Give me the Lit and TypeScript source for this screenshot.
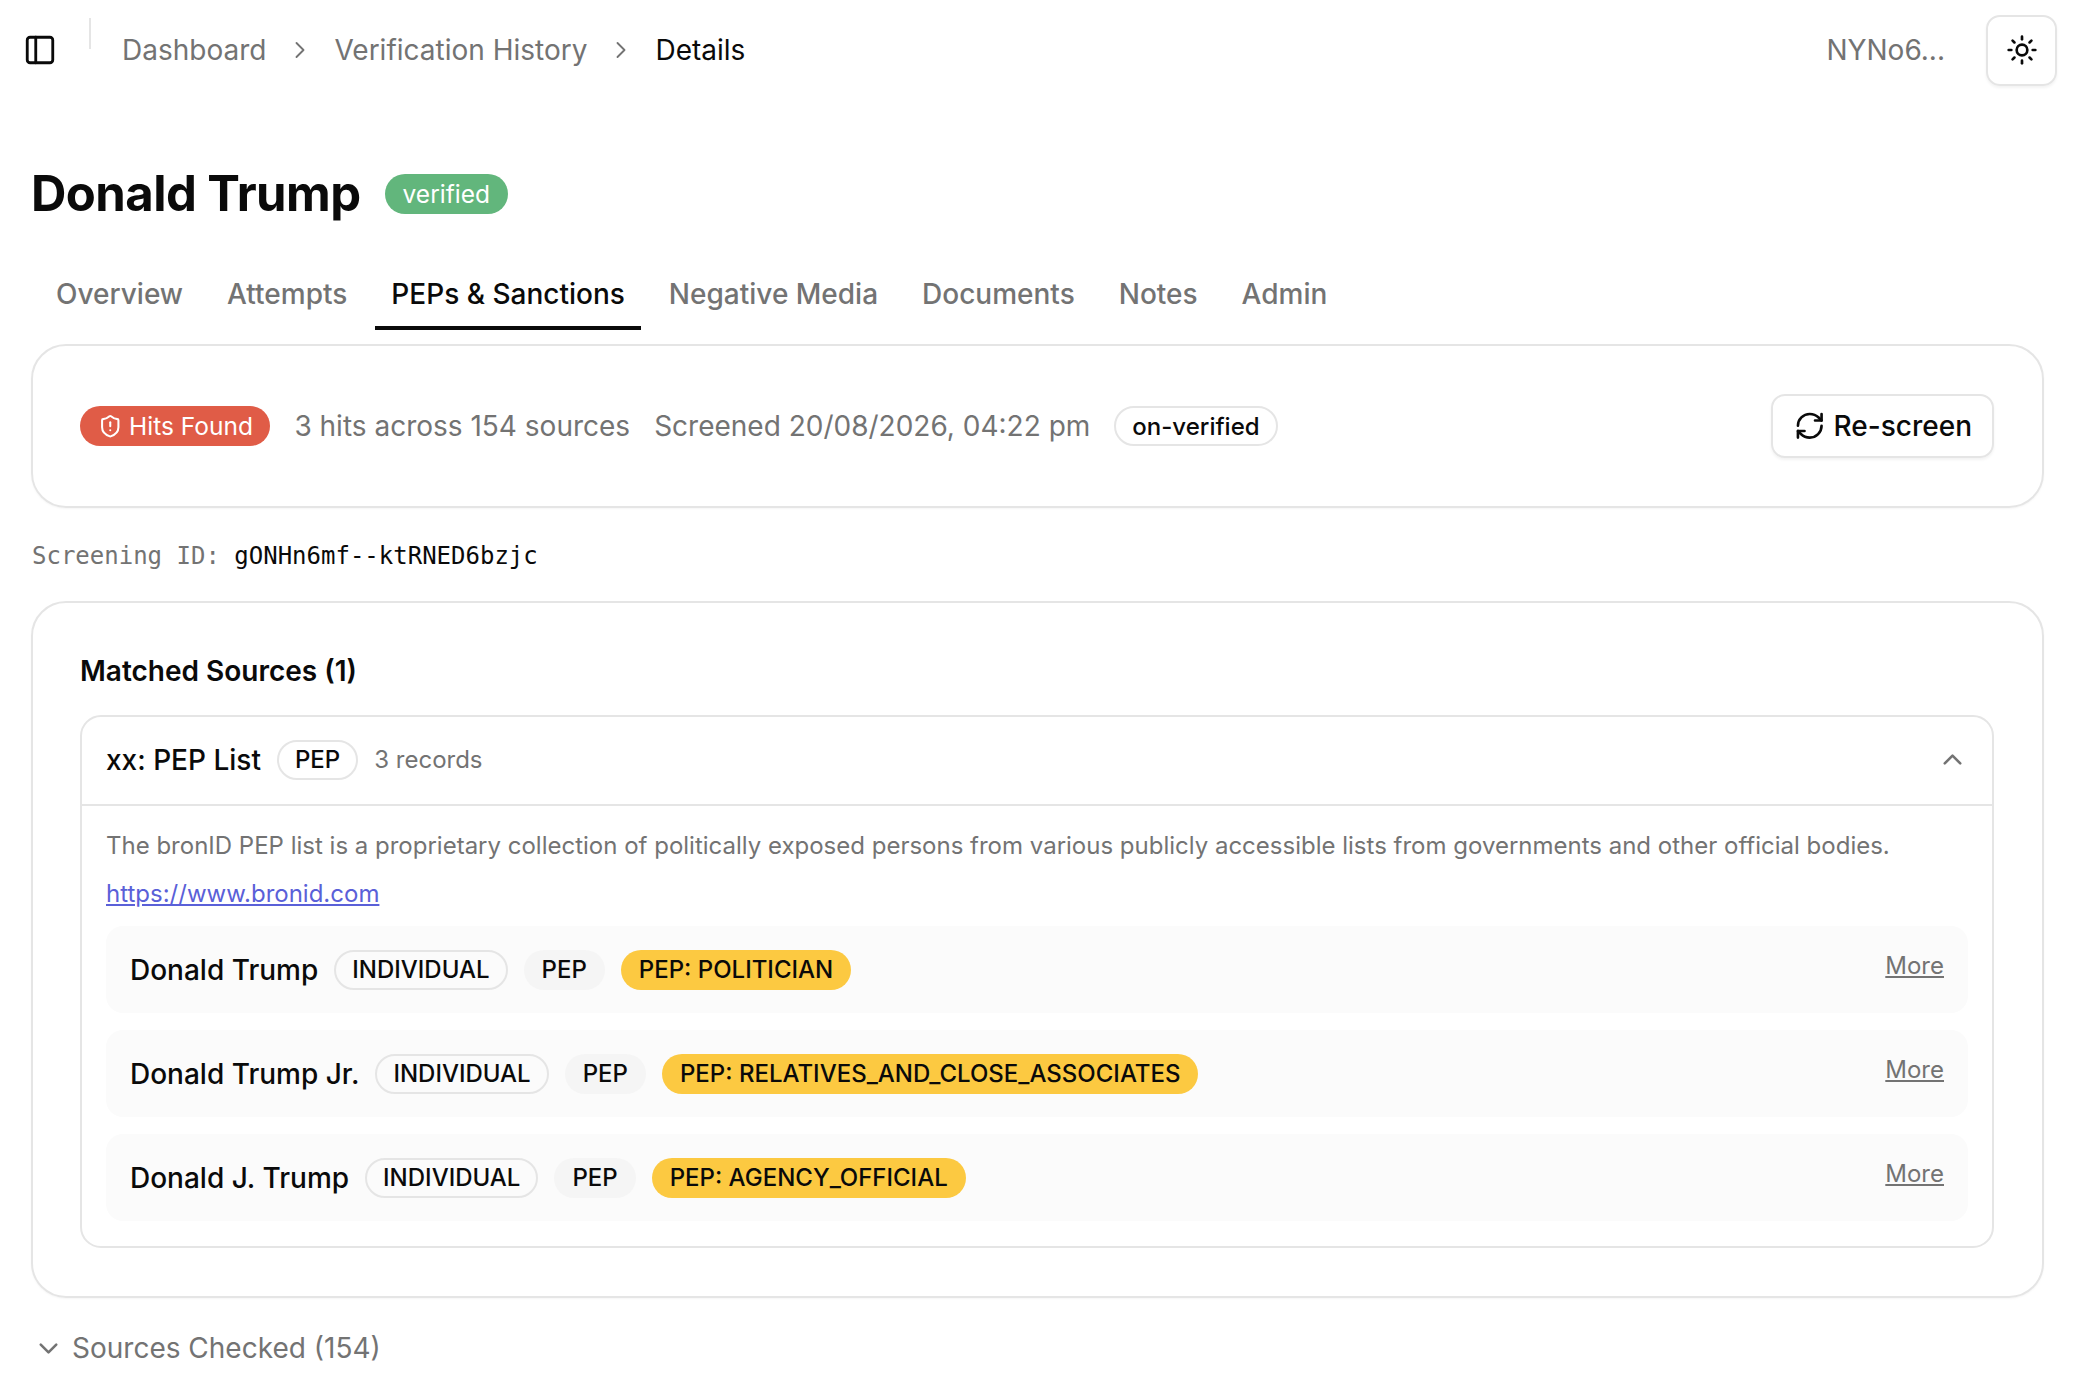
import { LitElement, html, css, svg } from 'lit';
import { customElement, property } from 'lit/decorators.js';

const icon = (paths: unknown, size = 28, sw = 2) => html`
    <svg width=${size} height=${size} viewBox="0 0 24 24" fill="none" stroke="currentColor"
        stroke-width=${sw} stroke-linecap="round" stroke-linejoin="round">${paths}</svg>`;

const PANEL = svg`<rect width="18" height="18" x="3" y="3" rx="2"/><path d="M9 3v18"/>`;
const CHEV_RIGHT = svg`<path d="m9 18 6-6-6-6"/>`;
const CHEV_UP = svg`<path d="m18 15-6-6-6 6"/>`;
const CHEV_DOWN = svg`<path d="m6 9 6 6 6-6"/>`;
const SUN = svg`<circle cx="12" cy="12" r="4"/><path d="M12 2v2"/><path d="M12 20v2"/><path d="m4.93 4.93 1.41 1.41"/><path d="m17.66 17.66 1.41 1.41"/><path d="M2 12h2"/><path d="M20 12h2"/><path d="m6.34 17.66-1.41 1.41"/><path d="m19.07 4.93-1.41 1.41"/>`;
const SHIELD = svg`<path d="M20 13c0 5-3.5 7.5-7.66 8.95a1 1 0 0 1-.67-.01C7.5 20.5 4 18 4 13V6a1 1 0 0 1 1-1c2 0 4.5-1.2 6.24-2.72a1.17 1.17 0 0 1 1.52 0C14.51 3.81 17 5 19 5a1 1 0 0 1 1 1z"/><path d="M12 8v4"/><path d="M12 16h.01"/>`;
const REFRESH = svg`<path d="M3 12a9 9 0 0 1 9-9 9.75 9.75 0 0 1 6.74 2.74L21 8"/><path d="M21 3v5h-5"/><path d="M21 12a9 9 0 0 1-9 9 9.75 9.75 0 0 1-6.74-2.74L3 16"/><path d="M8 16H3v5"/>`;

const TABS = ['Overview', 'Attempts', 'PEPs & Sanctions', 'Negative Media', 'Documents', 'Notes', 'Admin'];

const RECORDS = [
    { name: 'Donald Trump', tag: 'PEP: POLITICIAN' },
    { name: 'Donald Trump Jr.', tag: 'PEP: RELATIVES_AND_CLOSE_ASSOCIATES' },
    { name: 'Donald J. Trump', tag: 'PEP: AGENCY_OFFICIAL' },
];

@customElement('app-root')
export class AppRoot extends LitElement {
    static styles = css`
        :host {
            display: block;
            height: 1386px;
            overflow: hidden;
            background: #fff;
            color: #0a0a0a;
            font-family: Inter, "Liberation Sans", sans-serif;
            font-size: 28px;
        }

        svg {
            display: block;
            flex: none;
        }

        .topbar {
            display: flex;
            align-items: center;
            height: 100px;
            padding: 0 17px 0 23px;
        }

        .divider {
            align-self: flex-start;
            width: 2px;
            height: 31px;
            margin: 18px 31px 0 32px;
            background: #e5e5e5;
        }

        .crumbs {
            display: flex;
            align-items: center;
            gap: 20px;
            color: #737373;
        }

        .crumbs .current {
            color: #0a0a0a;
        }

        .crumbs svg {
            stroke-width: 1.6;
        }

        .user {
            margin-left: auto;
            margin-right: 41px;
            color: #737373;
        }

        .theme {
            display: flex;
            align-items: center;
            justify-content: center;
            box-sizing: border-box;
            width: 71px;
            height: 71px;
            border: 2px solid #e5e5e5;
            border-radius: 14px;
            box-shadow: 0 2px 3px rgba(0, 0, 0, 0.05);
        }

        main {
            padding: 0 30px 0 31px;
        }

        .title {
            display: flex;
            align-items: center;
            gap: 24px;
            margin-top: 64px;
        }

        h1 {
            margin: 0;
            font-size: 49px;
            line-height: 60px;
            font-weight: 700;
            letter-spacing: -0.55px;
        }

        .pill {
            display: inline-flex;
            align-items: center;
            gap: 7px;
            box-sizing: border-box;
            height: 40px;
            padding: 0 18px;
            border-radius: 999px;
            font-size: 24px;
            font-weight: 500;
            white-space: nowrap;
        }

        .verified {
            background: #62b67c;
            color: #fff;
            font-size: 24.5px;
            font-weight: 400;
        }

        .hits {
            background: #e05c47;
            color: #fff;
            padding: 0 17.5px;
            font-size: 24.5px;
            font-weight: 400;
        }

        .outline {
            border: 2px solid #e5e5e5;
            padding: 0 16px;
        }

        .soft {
            background: #f5f5f5;
        }

        .warn {
            background: #fcc941;
        }

        .tabs {
            display: flex;
            gap: 12px;
            margin-top: 39px;
            padding-left: 9px;
        }

        .tab {
            padding: 14px 16px 15px;
            line-height: 34px;
            border-bottom: 4px solid transparent;
            color: #737373;
            font-weight: 500;
        }

        .tab.active {
            color: #0a0a0a;
            border-bottom-color: #0a0a0a;
        }

        .card {
            box-sizing: border-box;
            border: 2px solid #e5e5e5;
            border-radius: 35px;
            padding: 47px 48px 47px 47px;
            box-shadow: 0 1px 2px rgba(0, 0, 0, 0.04);
        }

        .summary {
            display: flex;
            align-items: center;
            gap: 24px;
            height: 164px;
            margin-top: 14px;
            padding-top: 0;
            padding-bottom: 0;
        }

        .summary .muted {
            color: #737373;
        }

        .rescreen {
            display: flex;
            align-items: center;
            gap: 8px;
            box-sizing: border-box;
            height: 64px;
            margin-left: auto;
            padding: 0 20px 0 21px;
            border: 2px solid #e5e5e5;
            border-radius: 14px;
            font-weight: 500;
            box-shadow: 0 2px 3px rgba(0, 0, 0, 0.05);
        }

        .screening {
            margin: 32px 0 0 1px;
            font-family: "DejaVu Sans Mono", monospace;
            font-size: 24px;
            line-height: 32px;
            color: #737373;
        }

        .screening b {
            font-weight: 400;
            color: #0a0a0a;
        }

        .matched {
            margin-top: 29px;
            height: 697px;
        }

        h2 {
            margin: 0 0 23px;
            font-size: 28px;
            line-height: 42px;
            font-weight: 600;
        }

        .source {
            border: 2px solid #e5e5e5;
            border-radius: 21px;
            height: 533px;
            box-sizing: border-box;
        }

        .source-head {
            display: flex;
            align-items: center;
            gap: 16px;
            box-sizing: border-box;
            height: 89px;
            padding: 0 24px 2px 24px;
            border-bottom: 2px solid #e5e5e5;
            font-weight: 500;
        }

        .source-head .count {
            color: #737373;
            font-size: 24px;
            font-weight: 400;
        }

        .source-head svg {
            margin-left: auto;
            color: #737373;
        }

        .source-body {
            padding: 22px 24px 0;
        }

        .desc {
            margin: 0;
            color: #737373;
            font-size: 24px;
            line-height: 35px;
        }

        .link {
            display: block;
            margin-top: 13px;
            color: #5a60d8;
            font-size: 24px;
            line-height: 35px;
        }

        .records {
            display: flex;
            flex-direction: column;
            gap: 17px;
            margin-top: 15px;
        }

        .record {
            display: flex;
            align-items: center;
            gap: 16px;
            height: 87px;
            padding: 0 24px;
            border-radius: 17px;
            background: #fbfbfb;
            font-weight: 500;
        }

        .more {
            align-self: flex-start;
            margin: 22px 0 0 auto;
            color: #737373;
            font-size: 24px;
            line-height: 35px;
            font-weight: 400;
            text-decoration: underline;
        }

        .checked {
            display: flex;
            align-items: center;
            gap: 8px;
            margin: 29px 0 0 2px;
            color: #737373;
            line-height: 42px;
        }
    `;

    @property({ type: Array })
    tabs: string[] = TABS;

    private _renderRecord(record: { name: string; tag: string }) {
        return html`
            <div class="record">
                <span>${record.name}</span>
                <span class="pill outline">INDIVIDUAL</span>
                <span class="pill soft">PEP</span>
                <span class="pill warn">${record.tag}</span>
                <span class="more">More</span>
            </div>
        `;
    }

    render() {
        return html`
            <header class="topbar">
                ${icon(PANEL, 34)}
                <span class="divider"></span>
                <nav class="crumbs">
                    <span>Dashboard</span>
                    ${icon(CHEV_RIGHT)}
                    <span>Verification History</span>
                    ${icon(CHEV_RIGHT)}
                    <span class="current">Details</span>
                </nav>
                <span class="user">NYNo6...</span>
                <div class="theme">${icon(SUN, 32)}</div>
            </header>
            <main>
                <div class="title">
                    <h1>Donald Trump</h1>
                    <span class="pill verified">verified</span>
                </div>
                <div class="tabs">
                    ${this.tabs.map(tab => html`
                        <div class="tab ${tab === 'PEPs & Sanctions' ? 'active' : ''}">${tab}</div>
                    `)}
                </div>
                <section class="card summary">
                    <span class="pill hits">${icon(SHIELD, 24.5)}Hits Found</span>
                    <span class="muted">3 hits across 154 sources</span>
                    <span class="muted">Screened 20/08/2026, 04:22 pm</span>
                    <span class="pill outline">on-verified</span>
                    <div class="rescreen">${icon(REFRESH, 31.5)}Re-screen</div>
                </section>
                <p class="screening">Screening ID: <b>gONHn6mf--ktRNED6bzjc</b></p>
                <section class="card matched">
                    <h2>Matched Sources (1)</h2>
                    <div class="source">
                        <div class="source-head">
                            <span>xx: PEP List</span>
                            <span class="pill outline">PEP</span>
                            <span class="count">3 records</span>
                            ${icon(CHEV_UP, 31)}
                        </div>
                        <div class="source-body">
                            <p class="desc">The bronID PEP list is a proprietary collection of politically exposed persons from various publicly accessible lists from governments and other official bodies.</p>
                            <a class="link" href="#">https://www.bronid.com</a>
                            <div class="records">
                                ${RECORDS.map(r => this._renderRecord(r))}
                            </div>
                        </div>
                    </div>
                </section>
                <div class="checked">${icon(CHEV_DOWN, 31)}<span>Sources Checked (154)</span></div>
            </main>
        `;
    }
}

declare global {
    interface HTMLElementTagNameMap {
        'app-root': AppRoot;
    }
}
